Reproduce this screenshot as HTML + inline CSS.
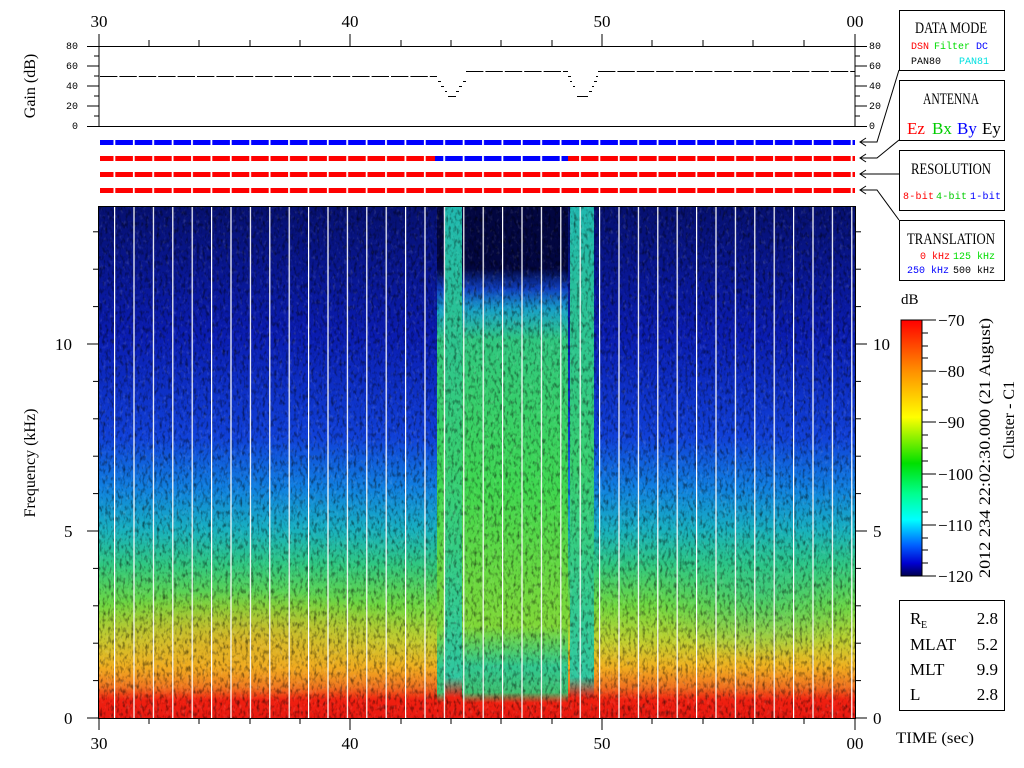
<!DOCTYPE html>
<html><head><meta charset="utf-8"><style>
html,body{margin:0;padding:0;background:#fff;width:1024px;height:768px;overflow:hidden}
svg{display:block}
text{font-family:"Liberation Serif",serif}
.m{font-family:"Liberation Mono",monospace}
</style></head><body>
<svg width="1024" height="768" viewBox="0 0 1024 768" xmlns="http://www.w3.org/2000/svg">
<defs>
<linearGradient id="bg" x1="0" y1="0" x2="0" y2="1">
<stop offset="0" stop-color="#061070"/>
<stop offset="0.25" stop-color="#0a1cb0"/>
<stop offset="0.45" stop-color="#1040d8"/>
<stop offset="0.55" stop-color="#1080e0"/>
<stop offset="0.63" stop-color="#18b0c0"/>
<stop offset="0.7" stop-color="#30c880"/>
<stop offset="0.78" stop-color="#70d840"/>
<stop offset="0.85" stop-color="#c0d030"/>
<stop offset="0.9" stop-color="#f0b020"/>
<stop offset="0.94" stop-color="#f07020"/>
<stop offset="0.965" stop-color="#f02010"/>
<stop offset="1" stop-color="#e81810"/>
</linearGradient>
<radialGradient id="warm">
<stop offset="0" stop-color="#f0a020" stop-opacity="0.6"/>
<stop offset="1" stop-color="#f0a020" stop-opacity="0"/>
</radialGradient>
<radialGradient id="cool">
<stop offset="0" stop-color="#20c0a0" stop-opacity="0.45"/>
<stop offset="1" stop-color="#20c0a0" stop-opacity="0"/>
</radialGradient>
<linearGradient id="band" x1="0" y1="0" x2="0" y2="1">
<stop offset="0" stop-color="#020640"/>
<stop offset="0.12" stop-color="#020640"/>
<stop offset="0.16" stop-color="#1040c0"/>
<stop offset="0.2" stop-color="#18a0c8"/>
<stop offset="0.26" stop-color="#30c880"/>
<stop offset="0.55" stop-color="#40d850"/>
<stop offset="0.82" stop-color="#80d838"/>
<stop offset="0.9" stop-color="#30c890"/>
<stop offset="0.95" stop-color="#40c070"/>
<stop offset="0.97" stop-color="#f02010"/>
<stop offset="1" stop-color="#e81810"/>
</linearGradient>
<linearGradient id="strip" x1="0" y1="0" x2="0" y2="1">
<stop offset="0" stop-color="#20b8b0"/>
<stop offset="0.5" stop-color="#38d070"/>
<stop offset="0.92" stop-color="#30c8a0"/>
<stop offset="0.96" stop-color="#f02010"/>
<stop offset="1" stop-color="#e81810"/>
</linearGradient>
<linearGradient id="cb" x1="0" y1="0" x2="0" y2="1">
<stop offset="0" stop-color="#ff0000"/>
<stop offset="0.2" stop-color="#ff9000"/>
<stop offset="0.38" stop-color="#ffff00"/>
<stop offset="0.56" stop-color="#00e000"/>
<stop offset="0.68" stop-color="#00ff90"/>
<stop offset="0.78" stop-color="#00ffff"/>
<stop offset="0.88" stop-color="#0060ff"/>
<stop offset="0.95" stop-color="#0000d0"/>
<stop offset="1" stop-color="#000050"/>
</linearGradient>
<pattern id="wl" x="114" y="0" width="19.4" height="768" patternUnits="userSpaceOnUse">
<rect x="0" y="0" width="1.2" height="768" fill="#fff"/>
</pattern>
<pattern id="gap" x="113.5" y="0" width="19.4" height="768" patternUnits="userSpaceOnUse">
<rect x="0" y="0" width="1.8" height="768" fill="#fff"/>
</pattern>
<filter id="nz" x="0" y="0" width="100%" height="100%">
<feTurbulence type="fractalNoise" baseFrequency="0.35 0.18" numOctaves="2" seed="4"/>
<feColorMatrix type="matrix" values="0 0 0 0 0  0 0 0 0 0  0 0 0 0 0  0 0 0 2.2 -1.05"/>
</filter>
<filter id="nz2" x="0" y="0" width="100%" height="100%">
<feTurbulence type="fractalNoise" baseFrequency="0.3 0.2" numOctaves="2" seed="9"/>
<feColorMatrix type="matrix" values="0 0 0 0 1  0 0 0 0 1  0 0 0 0 1  0 0 0 2.2 -1.25"/>
</filter>
<clipPath id="sc"><rect x="99" y="207" width="756" height="511"/></clipPath>
</defs>

<!-- top axis -->
<g font-size="17" text-anchor="middle" fill="#000">
<text x="99" y="27">30</text><text x="350" y="27">40</text><text x="602" y="27">50</text><text x="855" y="27">00</text>
</g>
<g stroke="#000" stroke-width="1">
<line x1="99" y1="34" x2="99" y2="46"/><line x1="350" y1="34" x2="350" y2="46"/><line x1="602" y1="34" x2="602" y2="46"/><line x1="855" y1="34" x2="855" y2="46"/>
<line x1="149" y1="40" x2="149" y2="46"/><line x1="199" y1="40" x2="199" y2="46"/><line x1="250" y1="40" x2="250" y2="46"/><line x1="300" y1="40" x2="300" y2="46"/>
<line x1="401" y1="40" x2="401" y2="46"/><line x1="451" y1="40" x2="451" y2="46"/><line x1="501" y1="40" x2="501" y2="46"/><line x1="552" y1="40" x2="552" y2="46"/>
<line x1="652" y1="40" x2="652" y2="46"/><line x1="703" y1="40" x2="703" y2="46"/><line x1="753" y1="40" x2="753" y2="46"/><line x1="804" y1="40" x2="804" y2="46"/>
<line x1="87" y1="46.5" x2="867" y2="46.5"/>
<line x1="87" y1="126.5" x2="867" y2="126.5"/>
<line x1="99" y1="46" x2="99" y2="126"/>
<line x1="855" y1="46" x2="855" y2="126"/>
<line x1="94" y1="56" x2="99" y2="56"/><line x1="94" y1="76" x2="99" y2="76"/><line x1="94" y1="96" x2="99" y2="96"/><line x1="94" y1="116" x2="99" y2="116"/>
<line x1="87" y1="66" x2="99" y2="66"/><line x1="87" y1="86" x2="99" y2="86"/><line x1="87" y1="106" x2="99" y2="106"/>
<line x1="855" y1="56" x2="860" y2="56"/><line x1="855" y1="76" x2="860" y2="76"/><line x1="855" y1="96" x2="860" y2="96"/><line x1="855" y1="116" x2="860" y2="116"/>
<line x1="855" y1="66" x2="867" y2="66"/><line x1="855" y1="86" x2="867" y2="86"/><line x1="855" y1="106" x2="867" y2="106"/>
</g>
<g font-size="10" fill="#000">
<text x="66" y="49" class="m">80</text><text x="66" y="69" class="m">60</text><text x="66" y="89" class="m">40</text><text x="66" y="109" class="m">20</text><text x="72" y="129" class="m">0</text>
<text x="869" y="49" class="m">80</text><text x="869" y="69" class="m">60</text><text x="869" y="89" class="m">40</text><text x="869" y="109" class="m">20</text><text x="869" y="129" class="m">0</text>
</g>
<text transform="translate(35,86) rotate(-90)" font-size="16" text-anchor="middle">Gain (dB)</text>
<g stroke="#000" stroke-width="1" stroke-dasharray="17.4 2">
<line x1="100" y1="76.5" x2="437" y2="76.5"/>
<line x1="466" y1="71.5" x2="568" y2="71.5"/>
<line x1="598" y1="71.5" x2="855" y2="71.5"/>
</g>
<g stroke="#000" stroke-width="1">
<line x1="438" y1="81.5" x2="441" y2="81.5"/><line x1="441" y1="86.5" x2="444" y2="86.5"/><line x1="445" y1="91.5" x2="447" y2="91.5"/><line x1="448" y1="96.5" x2="456" y2="96.5"/>
<line x1="456" y1="91.5" x2="459" y2="91.5"/><line x1="459" y1="86.5" x2="462" y2="86.5"/><line x1="463" y1="81.5" x2="466" y2="81.5"/>
<line x1="568" y1="76.5" x2="571" y2="76.5"/><line x1="570" y1="81.5" x2="572" y2="81.5"/><line x1="573" y1="86.5" x2="575" y2="86.5"/><line x1="577" y1="96.5" x2="588" y2="96.5"/>
<line x1="589" y1="91.5" x2="592" y2="91.5"/><line x1="592" y1="86.5" x2="594" y2="86.5"/><line x1="594" y1="81.5" x2="597" y2="81.5"/><line x1="596" y1="76.5" x2="598" y2="76.5"/>
</g>
<rect x="100" y="140" width="755" height="5" fill="#0000ff"/>
<rect x="100" y="156" width="755" height="5" fill="#ff0000"/>
<rect x="435" y="156" width="133" height="5" fill="#0000ff"/>
<rect x="100" y="172" width="755" height="5" fill="#ff0000"/>
<rect x="100" y="188" width="755" height="5" fill="#ff0000"/>
<rect x="100" y="138" width="755" height="58" fill="url(#gap)"/>

<!-- spectrogram -->
<g clip-path="url(#sc)">
<rect x="99" y="207" width="756" height="511" fill="url(#bg)"/>
<ellipse cx="240" cy="645" rx="200" ry="55" fill="url(#warm)"/>
<ellipse cx="760" cy="590" rx="110" ry="70" fill="url(#cool)"/>
<rect x="437" y="207" width="131" height="511" fill="url(#band)"/>
<rect x="445" y="207" width="17" height="511" fill="url(#strip)"/>
<rect x="570" y="207" width="24" height="511" fill="url(#strip)"/>
<rect x="99" y="207" width="756" height="511" filter="url(#nz)" opacity="0.6"/>
<rect x="99" y="207" width="756" height="511" filter="url(#nz2)" opacity="0.18"/>
<rect x="99" y="207" width="756" height="511" fill="url(#wl)"/>
</g>
<rect x="98.5" y="206.5" width="757" height="512" fill="none" stroke="#000" stroke-width="1"/>

<g stroke="#000" stroke-width="1">
<line x1="87" y1="718" x2="99" y2="718"/><line x1="87" y1="531" x2="99" y2="531"/><line x1="87" y1="344" x2="99" y2="344"/>
<line x1="93" y1="680.6" x2="99" y2="680.6"/><line x1="93" y1="643.2" x2="99" y2="643.2"/><line x1="93" y1="605.8" x2="99" y2="605.8"/><line x1="93" y1="568.4" x2="99" y2="568.4"/>
<line x1="93" y1="493.6" x2="99" y2="493.6"/><line x1="93" y1="456.2" x2="99" y2="456.2"/><line x1="93" y1="418.8" x2="99" y2="418.8"/><line x1="93" y1="381.4" x2="99" y2="381.4"/>
<line x1="93" y1="306.6" x2="99" y2="306.6"/><line x1="93" y1="269.2" x2="99" y2="269.2"/><line x1="93" y1="231.8" x2="99" y2="231.8"/>
<line x1="855" y1="718" x2="867" y2="718"/><line x1="855" y1="531" x2="867" y2="531"/><line x1="855" y1="344" x2="867" y2="344"/>
<line x1="855" y1="680.6" x2="861" y2="680.6"/><line x1="855" y1="643.2" x2="861" y2="643.2"/><line x1="855" y1="605.8" x2="861" y2="605.8"/><line x1="855" y1="568.4" x2="861" y2="568.4"/>
<line x1="855" y1="493.6" x2="861" y2="493.6"/><line x1="855" y1="456.2" x2="861" y2="456.2"/><line x1="855" y1="418.8" x2="861" y2="418.8"/><line x1="855" y1="381.4" x2="861" y2="381.4"/>
<line x1="855" y1="306.6" x2="861" y2="306.6"/><line x1="855" y1="269.2" x2="861" y2="269.2"/><line x1="855" y1="231.8" x2="861" y2="231.8"/>
<line x1="99" y1="718" x2="99" y2="730"/><line x1="350" y1="718" x2="350" y2="730"/><line x1="602" y1="718" x2="602" y2="730"/><line x1="855" y1="718" x2="855" y2="730"/>
<line x1="149" y1="718" x2="149" y2="724"/><line x1="199" y1="718" x2="199" y2="724"/><line x1="250" y1="718" x2="250" y2="724"/><line x1="300" y1="718" x2="300" y2="724"/>
<line x1="401" y1="718" x2="401" y2="724"/><line x1="451" y1="718" x2="451" y2="724"/><line x1="501" y1="718" x2="501" y2="724"/><line x1="552" y1="718" x2="552" y2="724"/>
<line x1="652" y1="718" x2="652" y2="724"/><line x1="703" y1="718" x2="703" y2="724"/><line x1="753" y1="718" x2="753" y2="724"/><line x1="804" y1="718" x2="804" y2="724"/>
</g>
<g font-size="17" fill="#000">
<text x="64" y="724">0</text><text x="64" y="537">5</text><text x="55" y="350">10</text>
<text x="873" y="724">0</text><text x="873" y="537">5</text><text x="873" y="350">10</text>
</g>
<g font-size="17" text-anchor="middle">
<text x="99" y="749">30</text><text x="350" y="749">40</text><text x="602" y="749">50</text><text x="855" y="749">00</text>
</g>
<text transform="translate(35,463) rotate(-90)" font-size="16" text-anchor="middle">Frequency (kHz)</text>
<text x="896" y="743" font-size="16" textLength="78" lengthAdjust="spacingAndGlyphs">TIME (sec)</text>

<g fill="#fff" stroke="#000" stroke-width="1">
<rect x="899.5" y="10.5" width="105" height="60"/>
<rect x="899.5" y="80.5" width="105" height="60"/>
<rect x="899.5" y="150.5" width="105" height="60"/>
<rect x="899.5" y="220.5" width="105" height="60"/>
<rect x="899.5" y="600.5" width="105" height="110"/>
</g>
<g stroke="#000" stroke-width="1" fill="none">
<polyline points="899,70 877,142 860,142"/>
<polyline points="899,140 877,158 860,158"/>
<polyline points="899,174 860,174"/>
<polyline points="899,220 877,190 860,190"/>
<polyline points="866,138 860,142 866,146"/>
<polyline points="866,154 860,158 866,162"/>
<polyline points="866,170 860,174 866,178"/>
<polyline points="866,186 860,190 866,194"/>
</g>
<g font-size="16">
<text x="915" y="33" textLength="72" lengthAdjust="spacingAndGlyphs">DATA MODE</text>
<text x="923" y="104" textLength="56" lengthAdjust="spacingAndGlyphs">ANTENNA</text>
<text x="911" y="174" textLength="80" lengthAdjust="spacingAndGlyphs">RESOLUTION</text>
<text x="907" y="244" textLength="88" lengthAdjust="spacingAndGlyphs">TRANSLATION</text>
</g>
<g font-size="10">
<text x="911" y="49" fill="#ff0000" class="m">DSN</text><text x="934" y="49" fill="#00dd00" class="m">Filter</text><text x="976" y="49" fill="#0000ff" class="m">DC</text>
<text x="911" y="64" fill="#000" class="m">PAN80</text><text x="959" y="64" fill="#00e0e0" class="m">PAN81</text>
<text x="903" y="199" fill="#ff0000" class="m" textLength="31">8-bit</text><text x="936" y="199" fill="#00cc00" class="m" textLength="31">4-bit</text><text x="970" y="199" fill="#0000ff" class="m" textLength="31">1-bit</text>
<text x="920" y="259" fill="#ff0000" class="m">0 kHz</text><text x="953" y="259" fill="#00dd00" class="m">125 kHz</text>
<text x="907" y="273" fill="#0000ff" class="m">250 kHz</text><text x="953" y="273" fill="#000" class="m">500 kHz</text>
</g>
<g font-size="17">
<text x="907" y="134" fill="#ff0000">Ez</text><text x="932" y="134" fill="#00cc00">Bx</text><text x="957" y="134" fill="#0000ff">By</text><text x="982" y="134" fill="#000">Ey</text>
</g>
<text x="901" y="304" font-size="15">dB</text>
<rect x="901" y="320" width="21" height="256" fill="url(#cb)" stroke="#000" stroke-width="1"/>
<g stroke="#000" stroke-width="1">
<line x1="922" y1="320" x2="936" y2="320"/><line x1="922" y1="371" x2="936" y2="371"/><line x1="922" y1="422" x2="936" y2="422"/><line x1="922" y1="474" x2="936" y2="474"/><line x1="922" y1="525" x2="936" y2="525"/><line x1="922" y1="576" x2="936" y2="576"/>
<line x1="922" y1="333" x2="928" y2="333"/><line x1="922" y1="346" x2="928" y2="346"/><line x1="922" y1="358" x2="928" y2="358"/>
<line x1="922" y1="384" x2="928" y2="384"/><line x1="922" y1="397" x2="928" y2="397"/><line x1="922" y1="410" x2="928" y2="410"/>
<line x1="922" y1="435" x2="928" y2="435"/><line x1="922" y1="448" x2="928" y2="448"/><line x1="922" y1="461" x2="928" y2="461"/>
<line x1="922" y1="487" x2="928" y2="487"/><line x1="922" y1="499" x2="928" y2="499"/><line x1="922" y1="512" x2="928" y2="512"/>
<line x1="922" y1="538" x2="928" y2="538"/><line x1="922" y1="550" x2="928" y2="550"/><line x1="922" y1="563" x2="928" y2="563"/>
</g>
<g font-size="17">
<text x="938" y="326">−70</text><text x="938" y="377">−80</text><text x="938" y="428">−90</text><text x="938" y="480">−100</text><text x="938" y="531">−110</text><text x="938" y="582">−120</text>
</g>
<text transform="translate(990,448) rotate(-90)" font-size="16" text-anchor="middle" textLength="260" lengthAdjust="spacingAndGlyphs">2012 234 22:02:30.000 (21 August)</text>
<text transform="translate(1014,420) rotate(-90)" font-size="16" text-anchor="middle">Cluster - C1</text>
<g font-size="17">
<text x="910" y="624">R</text><text x="921" y="628" font-size="10">E</text><text x="998" y="624" text-anchor="end">2.8</text>
<text x="910" y="650">MLAT</text><text x="998" y="650" text-anchor="end">5.2</text>
<text x="910" y="675">MLT</text><text x="998" y="675" text-anchor="end">9.9</text>
<text x="910" y="700">L</text><text x="998" y="700" text-anchor="end">2.8</text>
</g>
</svg>
</body></html>
